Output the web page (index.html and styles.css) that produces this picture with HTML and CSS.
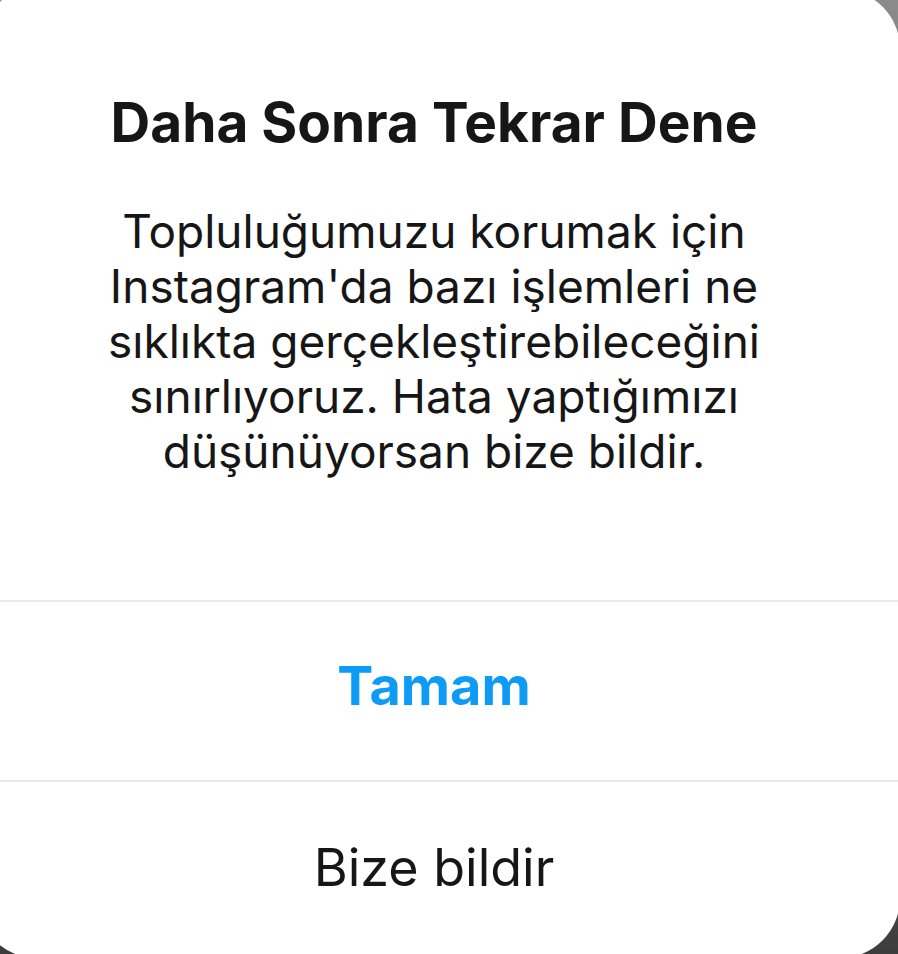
FILE: index.html
```html
<!DOCTYPE html>
<html lang="tr">
<head>
    <meta charset="UTF-8">
    <meta name="viewport" content="width=device-width, initial-scale=1.0">
    <title>Daha Sonra Tekrar Dene</title>
    <link rel="stylesheet" href="styles.css">
</head>
<body>
    <div class="dialog">
        <div class="dialog-body">
            <h1 class="dialog-title">Daha Sonra Tekrar Dene</h1>
            <p class="dialog-text">
                Topluluğumuzu korumak için<br>
                Instagram'da bazı işlemleri ne<br>
                sıklıkta gerçekleştirebileceğini<br>
                sınırlıyoruz. Hata yaptığımızı<br>
                düşünüyorsan bize bildir.
            </p>
        </div>
        <button class="dialog-btn primary">Tamam</button>
        <button class="dialog-btn">Bize bildir</button>
    </div>
</body>
</html>
```

FILE: styles.css
```css
:root {
    --text: #161616;
    --blue: #0d9bf5;
    --divider: #e9e9e9;
}

body {
    margin: 0;
    height: 954px;
    overflow: hidden;
    font-family: Inter, 'Liberation Sans', sans-serif;
    background: linear-gradient(180deg, #8a8a8a 0%, #7a7a7a 60%, #3c3c3c 100%);
}

.dialog {
    width: 923px;
    height: 969px;
    margin: -11px 0 0 -23px;
    background: #fff;
    border-radius: 60px;
    display: flex;
    flex-direction: column;
}

.dialog-body {
    padding: 101px 9px 0 0;
    height: 611px;
    flex-shrink: 0;
    box-sizing: border-box;
    text-align: center;
    color: var(--text);
}

.dialog-title {
    margin: 0;
    font-size: 55px;
    line-height: 64px;
    font-weight: 700;
}

.dialog-text {
    margin: 50px 0 0;
    font-size: 46px;
    line-height: 55px;
    font-weight: 400;
}

.dialog-btn {
    display: flex;
    align-items: center;
    justify-content: center;
    height: 180px;
    flex-shrink: 0;
    padding: 0 9px 8px 0;
    border: none;
    border-top: 2px solid var(--divider);
    background: none;
    font-family: inherit;
    font-size: 52px;
    color: var(--text);
    box-sizing: border-box;
}

.dialog-btn.primary {
    padding-bottom: 12px;
    font-size: 54px;
    font-weight: 700;
    color: var(--blue);
}
```
